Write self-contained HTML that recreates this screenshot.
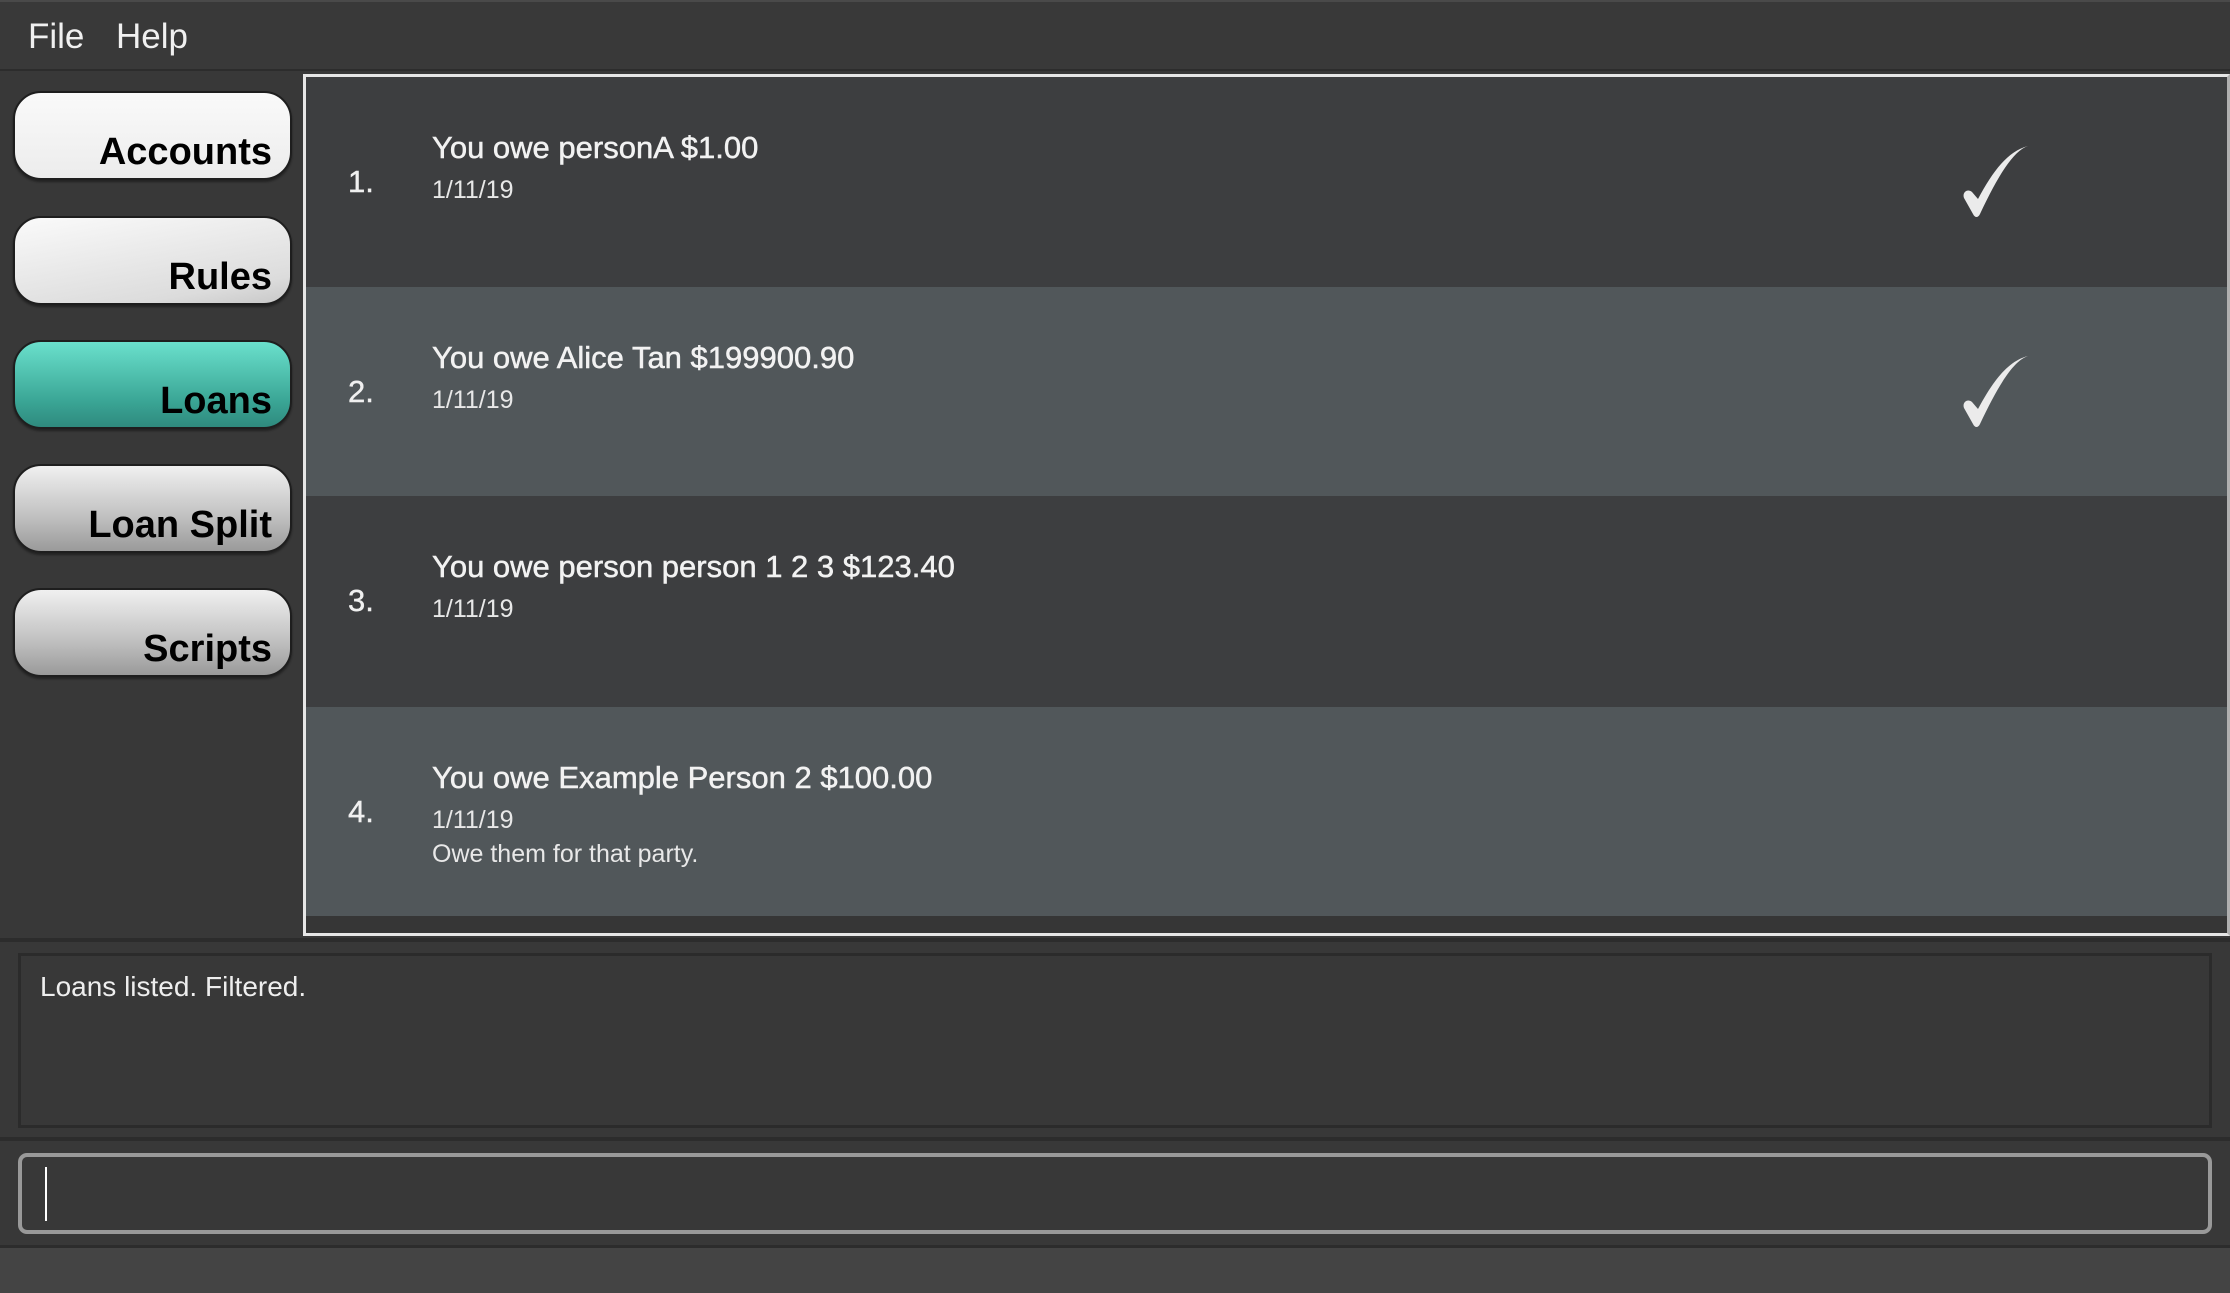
<!DOCTYPE html>
<html><head><meta charset="utf-8"><style>
*{margin:0;padding:0;box-sizing:border-box}
body{width:2230px;height:1293px;background:#383838;font-family:"Liberation Sans",sans-serif;position:relative;overflow:hidden;color:#fff}
.abs{position:absolute}
.menu{left:0;top:0;width:2230px;height:71px;background:#393939;border-top:2px solid #4a4a4a;border-bottom:2px solid #2c2c2c}
.menu span{position:absolute;top:15px;font-size:35px;color:#f0f0f0;font-weight:300}
.btn{left:13px;width:279px;height:89px;border-radius:28px;border:2px solid #1e1e1e;text-align:right;padding-right:18px;font-weight:bold;font-size:38px;color:#000;line-height:118px;box-shadow:0 2px 2px rgba(0,0,0,.4)}
.w1{background:linear-gradient(#fafafa,#ececec)}
.w2{background:linear-gradient(170deg,#fafafa,#dcdcdc 80%,#c8c8c8)}
.teal{background:linear-gradient(#6ae0cc,#3aa595 70%,#2f8a7e)}
.gray{background:linear-gradient(#f0f0f0,#c0c0c0 60%,#9a9a9a)}
.panel{left:303px;top:74px;width:1927px;height:862px;border:3px solid #e6e6e6;background:#363636;border-right-color:#b0b0b0}
.row{position:absolute;left:0;width:1921px}
.r1{background:#3d3e40}.r2{background:#51575a}
.idx{position:absolute;left:42px;font-size:31px;color:#f0f0f0;-webkit-text-stroke:0.4px #f0f0f0}
.t{position:absolute;left:126px;font-size:31px;color:#f2f2f2;-webkit-text-stroke:0.5px #f2f2f2}
.d{position:absolute;left:126px;font-size:25px;color:#e8e8e8}
.res{left:18px;top:953px;width:2194px;height:175px;border:3px solid #2b2b2b;background:#383838}
.cmd{left:18px;top:1153px;width:2194px;height:81px;border:4px solid #999;border-radius:9px;background:#383838}
</style></head><body>
<div class="abs menu"><span style="left:28px">File</span><span style="left:116px">Help</span></div>

<div class="abs btn w1" style="top:91px">Accounts</div>
<div class="abs btn w2" style="top:216px">Rules</div>
<div class="abs btn teal" style="top:340px">Loans</div>
<div class="abs btn gray" style="top:464px">Loan Split</div>
<div class="abs btn gray" style="top:588px">Scripts</div>

<div class="abs panel">
 <div class="row r1" style="top:0;height:210px">
  <div class="idx" style="top:87px">1.</div>
  <div class="t" style="top:53px">You owe personA $1.00</div>
  <div class="d" style="top:99px">1/11/19</div>
  <svg style="position:absolute;left:1657px;top:69px" width="66" height="72" viewBox="0 0 66 72"><path d="M65,0 C50,5 35,30 17,68 C15,72 12,72 10,68 L1,52 C-1,47 4,42 9,46 L15,53 C30,25 45,5 65,0 Z" fill="#ebebeb"/></svg>
 </div>
 <div class="row r2" style="top:210px;height:209px">
  <div class="idx" style="top:87px">2.</div>
  <div class="t" style="top:53px">You owe Alice Tan $199900.90</div>
  <div class="d" style="top:99px">1/11/19</div>
  <svg style="position:absolute;left:1657px;top:69px" width="66" height="72" viewBox="0 0 66 72"><path d="M65,0 C50,5 35,30 17,68 C15,72 12,72 10,68 L1,52 C-1,47 4,42 9,46 L15,53 C30,25 45,5 65,0 Z" fill="#ebebeb"/></svg>
 </div>
 <div class="row r1" style="top:419px;height:211px">
  <div class="idx" style="top:87px">3.</div>
  <div class="t" style="top:53px">You owe person person 1 2 3 $123.40</div>
  <div class="d" style="top:99px">1/11/19</div>
 </div>
 <div class="row r2" style="top:630px;height:209px">
  <div class="idx" style="top:87px">4.</div>
  <div class="t" style="top:53px">You owe Example Person 2 $100.00</div>
  <div class="d" style="top:99px">1/11/19</div>
  <div class="d" style="top:133px">Owe them for that party.</div>
 </div>
</div>

<div class="abs" style="left:0;top:938px;width:2230px;height:4px;background:#2c2c2c"></div>
<div class="abs res"><div style="position:absolute;left:19px;top:15px;font-size:28px;color:#eee;font-weight:300">Loans listed. Filtered.</div></div>
<div class="abs" style="left:0;top:1137px;width:2230px;height:4px;background:#2c2c2c"></div>
<div class="abs cmd"><div style="position:absolute;left:23px;top:10px;width:2px;height:54px;background:#fff"></div></div>
<div class="abs" style="left:0;top:1245px;width:2230px;height:3px;background:#2c2c2c"></div>
<div class="abs" style="left:0;top:1248px;width:2230px;height:45px;background:#444"></div>
</body></html>
